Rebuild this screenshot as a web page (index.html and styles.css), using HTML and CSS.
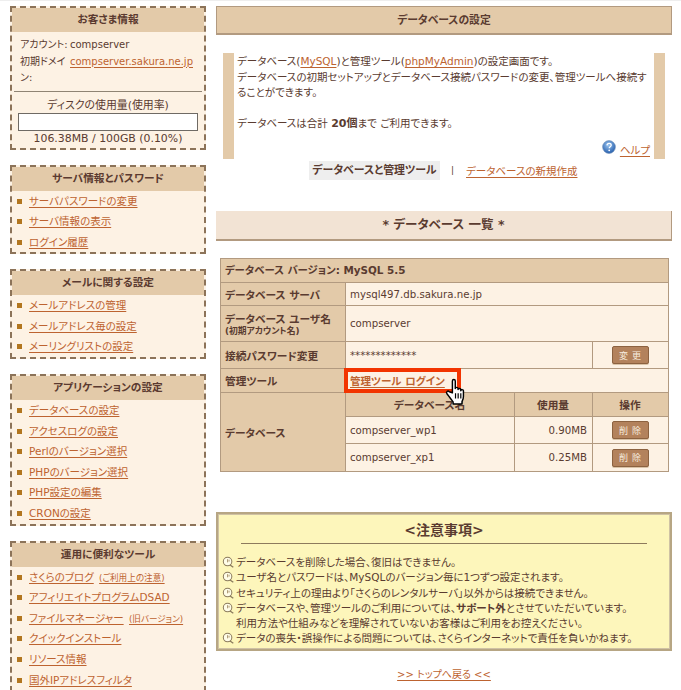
FILE: index.html
```html
<!DOCTYPE html>
<html lang="ja">
<head>
<meta charset="utf-8">
<title>データベースの設定</title>
<link rel="stylesheet" href="styles.css">
</head>
<body>
<svg class="defs" width="0" height="0" aria-hidden="true">
  <symbol id="note" viewBox="0 0 14 14">
    <circle cx="6" cy="6" r="4.6" fill="#fffde8" stroke="#8a7a5c" stroke-width="1.1"/>
    <path d="M6 3.4v3.4M7.6 4v2" stroke="#a58f68" stroke-width="1" fill="none"/>
    <path d="M8.6 9.6l3.6 2.6" stroke="#8a7a5c" stroke-width="1.4" fill="none"/>
  </symbol>
</svg>
<div class="page">
  <aside class="side">
    <section class="box">
      <h2 class="box-title">お客さま情報</h2>
      <div class="acct">
        <span>アカウント:</span><span>compserver</span>
        <span>初期ドメイン:</span><a href="#">compserver.sakura.ne.jp</a>
      </div>
      <div class="disk">
        <p class="disk-label">ディスクの使用量(使用率)</p>
        <div class="meter"></div>
        <p class="disk-value">106.38MB / 100GB (0.10%)</p>
      </div>
    </section>
    <section class="box">
      <h2 class="box-title">サーバ情報とパスワード</h2>
      <ul class="menu">
        <li><a href="#">サーバパスワードの変更</a></li>
        <li><a href="#">サーバ情報の表示</a></li>
        <li><a href="#">ログイン履歴</a></li>
      </ul>
    </section>
    <section class="box">
      <h2 class="box-title">メールに関する設定</h2>
      <ul class="menu">
        <li><a href="#">メールアドレスの管理</a></li>
        <li><a href="#">メールアドレス毎の設定</a></li>
        <li><a href="#">メーリングリストの設定</a></li>
      </ul>
    </section>
    <section class="box">
      <h2 class="box-title">アプリケーションの設定</h2>
      <ul class="menu">
        <li><a href="#">データベースの設定</a></li>
        <li><a href="#">アクセスログの設定</a></li>
        <li><a href="#">Perlのバージョン選択</a></li>
        <li><a href="#">PHPのバージョン選択</a></li>
        <li><a href="#">PHP設定の編集</a></li>
        <li><a href="#">CRONの設定</a></li>
      </ul>
    </section>
    <section class="box">
      <h2 class="box-title">運用に便利なツール</h2>
      <ul class="menu">
        <li><a href="#">さくらのブログ</a> <a class="small" href="#">(ご利用上の注意)</a></li>
        <li><a href="#">アフィリエイトプログラムDSAD</a></li>
        <li><a href="#">ファイルマネージャー</a> <a class="small" href="#">(旧バージョン)</a></li>
        <li><a href="#">クイックインストール</a></li>
        <li><a href="#">リソース情報</a></li>
        <li><a href="#">国外IPアドレスフィルタ</a></li>
      </ul>
    </section>
  </aside>
  <main class="main">
    <h1 class="page-title">データベースの設定</h1>
    <div class="intro">
      <p>データベース(<a href="#">MySQL</a>)と管理ツール(<a href="#">phpMyAdmin</a>)の設定画面です。<br>データベースの初期セットアップとデータベース接続パスワードの変更、管理ツールへ接続することができます。</p>
      <p class="quota">データベースは合計 <b>20個</b>まで ご利用できます。</p>
      <p class="help">
        <svg class="help-icon" viewBox="0 0 14 14" aria-hidden="true">
          <defs><radialGradient id="hg" cx="45%" cy="35%" r="70%"><stop offset="0" stop-color="#9cc6f0"/><stop offset="1" stop-color="#1c56a8"/></radialGradient></defs>
          <circle cx="7" cy="7" r="6.4" fill="url(#hg)" stroke="#6f8fb5" stroke-width=".6"/>
          <path d="M5 5.4c.1-1.4 1.1-2 2.1-2 1.2 0 2.1.7 2.1 1.8 0 1.5-2 1.6-2 3" fill="none" stroke="#fff" stroke-width="1.3"/>
          <circle cx="7.2" cy="10.3" r=".9" fill="#fff"/>
        </svg>
        <a href="#">ヘルプ</a>
      </p>
    </div>
    <nav class="tabs">
      <span class="tab-on">データベースと管理ツール</span>
      <span class="tab-sep">|</span>
      <a href="#">データベースの新規作成</a>
    </nav>
    <h2 class="list-title">* データベース 一覧 *</h2>
    <table class="db">
      <colgroup><col class="c1"><col class="c2"><col class="c3"><col class="c4"></colgroup>
      <tr class="r1"><th colspan="4">データベース バージョン: MySQL 5.5</th></tr>
      <tr class="r2"><th>データベース サーバ</th><td colspan="3">mysql497.db.sakura.ne.jp</td></tr>
      <tr class="r3"><th>データベース ユーザ名<small>(初期アカウント名)</small></th><td colspan="3">compserver</td></tr>
      <tr class="r4"><th>接続パスワード変更</th><td colspan="2">*************</td><td class="op"><button class="btn" type="button">変 更</button></td></tr>
      <tr class="r5"><th>管理ツール</th><td colspan="3" class="login"><a href="#">管理ツール ログイン</a>
        <span class="mark"></span>
        <svg class="hand" viewBox="0 0 20 24" aria-hidden="true">
          <path d="M7 13V3.2C7 1.6 9.4 1.6 9.4 3.2V9.6c0-1.4 2.3-1.4 2.3 0v.8c0-1.3 2.3-1.3 2.3 0v.9c0-1.2 2.2-1.2 2.2.1v4.8c0 2-.6 2.9-1.2 4.2v2H7.6v-1.8C6.4 19 3.6 15.6 2.4 13.8c-1-1.5.8-2.8 2-1.6z" fill="#fff" stroke="#000" stroke-width="1.2" stroke-linejoin="round"/>
          <path d="M9.6 13.4v4.4M11.8 13.4v4.4M14 13.4v4.4" stroke="#000" stroke-width="1"/>
        </svg>
      </td></tr>
      <tr class="r6"><th rowspan="3">データベース</th><th class="ch">データベース名</th><th class="ch">使用量</th><th class="ch">操作</th></tr>
      <tr class="r7"><td>compserver_wp1</td><td class="num">0.90MB</td><td class="op"><button class="btn" type="button">削 除</button></td></tr>
      <tr class="r8"><td>compserver_xp1</td><td class="num">0.25MB</td><td class="op"><button class="btn" type="button">削 除</button></td></tr>
    </table>
    <section class="notice">
      <h3 class="notice-title">&lt;注意事項&gt;</h3>
      <ul class="notes">
        <li><svg class="note-icon"><use href="#note"/></svg>データベースを削除した場合、復旧はできません。</li>
        <li><svg class="note-icon"><use href="#note"/></svg>ユーザ名とパスワードは、MySQLのバージョン毎に1つずつ設定されます。</li>
        <li><svg class="note-icon"><use href="#note"/></svg>セキュリティ上の理由より「さくらのレンタルサーバ」以外からは接続できません。</li>
        <li><svg class="note-icon"><use href="#note"/></svg>データベースや、管理ツールのご利用については、<b>サポート外</b>とさせていただいています。<br>利用方法や仕組みなどを理解されていないお客様はご利用をお控えください。</li>
        <li><svg class="note-icon"><use href="#note"/></svg>データの喪失・誤操作による問題については、さくらインターネットで責任を負いかねます。</li>
      </ul>
    </section>
    <p class="back"><a href="#">&gt;&gt; トップへ戻る &lt;&lt;</a></p>
  </main>
</div>
</body>
</html>
```
FILE: styles.css
```css
* { box-sizing: border-box; }
html, body { margin: 0; height: 690px; overflow: hidden; background: #fff; }
body {
  font-family: "DejaVu Sans", "Noto Sans CJK JP", sans-serif;
  font-size: 10.5px;
  color: #5a3b30;
  border-top: 1px solid #eee;
  font-feature-settings: "palt";
}
a { color: #bd6330; text-decoration: underline; text-underline-offset: 2px; }
p, h1, h2, h3, ul { margin: 0; padding: 0; }
ul { list-style: none; }
.defs { position: absolute; }

.page { display: flex; align-items: flex-start; padding: 5px 0 0 10px; gap: 10px; }
.side { width: 196px; flex: none; }
.main { width: 456px; flex: none; }

.box { border: 2px dashed #8c7359; background: #fdf2e4; margin-bottom: 15px; }
.box-title {
  background: #e3caa9;
  height: 24px;
  line-height: 23px;
  text-align: center;
  font-size: 10.7px;
  font-weight: 700;
  color: #5b3a30;
}
.acct {
  display: grid;
  grid-template-columns: 50px 1fr;
  margin: 5px 2px 0;
  padding: 0 0 4px 6px;
  font-size: 10px;
  line-height: 16.5px;
  border-bottom: 1px solid #8f8474;
  align-items: start;
}
.acct a { white-space: nowrap; }
.disk { text-align: center; font-size: 10.9px; line-height: 14px; padding-top: 7px; height: 56px; }
.meter { height: 18px; margin: 0 6px; background: #fff; border: 1px solid #6f6a64; }
.disk-value { line-height: 15px; }

.menu { padding: 0 0 0 5px; }
.menu li { height: 20.6px; line-height: 20.6px; white-space: nowrap; position: relative; padding-left: 12px; }
.menu li::before {
  content: "";
  position: absolute;
  left: 0;
  top: 8px;
  width: 5px;
  height: 5px;
  background: #b2761f;
}
.small { font-size: 8.6px; margin-left: 2px; }

.page-title {
  height: 29px;
  line-height: 27px;
  text-align: center;
  font-size: 10.8px;
  font-weight: 700;
  background: #e3caa9;
  border: 1px solid #b29a80;
  border-bottom-width: 2px;
}
.intro {
  margin: 18px 7px 0;
  padding: 1px 4px 0 3px;
  height: 106px;
  border-left: 11px solid #e3caa9;
  border-right: 11px solid #e3caa9;
  line-height: 15.5px;
  display: flex;
  flex-direction: column;
}
.intro .quota { margin-top: 15px; }
.help { margin-top: auto; text-align: right; line-height: 18px; }
.help-icon { width: 14px; height: 14px; vertical-align: 0; margin-right: 1px; }
.quota b { font-size: 11px; }

.tabs { display: flex; align-items: center; height: 20px; margin-top: 1px; margin-left: 93px; }
.tab-on { background: #eee; font-size: 10.9px; font-weight: 700; height: 19px; line-height: 19px; width: 131px; text-align: center; white-space: nowrap; }
.tab-sep { margin: 0 12px 0 11px; font-size: 9px; }

.list-title {
  margin-top: 31px;
  height: 30px;
  line-height: 28px;
  text-align: center;
  font-size: 12.5px;
  font-weight: 700;
  background: #f2e3d4;
  border-right: 1px solid #b29a80;
  border-bottom: 2px solid #b29a80;
}

.db {
  border-collapse: collapse;
  table-layout: fixed;
  width: 448px;
  margin: 17px 0 0 4px;
  background: #fdf2e4;
}
.c1 { width: 125px; }
.c2 { width: 169px; }
.c3 { width: 78px; }
.c4 { width: 76px; }
.db th, .db td { border: 1px solid #b29a80; padding: 0 5px 0 4px; text-align: left; }
.db td { font-size: 10.2px; }
.db th { background: #e3caa9; font-size: 10.7px; font-weight: 700; white-space: nowrap; }
.db .r1 th { font-size: 10.4px; padding-bottom: 2px; }
.db small { display: block; font-size: 8.8px; line-height: 11px; }
.db .ch { text-align: center; }
.db .num { text-align: right; }
.db .op { text-align: center; padding: 0; }
.r1 { height: 24px; }
.r2 { height: 23px; }
.r3 { height: 36px; }
.r4 { height: 27px; }
.r5 { height: 24px; }
.r6 { height: 24px; }
.r7 { height: 27px; }
.r8 { height: 28px; }
.btn {
  display: block;
  width: 37px;
  height: 18px;
  margin: 0 auto;
  padding: 0;
  border: 1px solid #8c6240;
  border-radius: 2px;
  background: #b3825c;
  color: #f7ecdf;
  font: 9px "Noto Sans CJK JP", sans-serif;
  letter-spacing: 1px;
  box-shadow: 0 1px 0 #d9c2a6;
}
.db .login { position: relative; font-size: 10.5px; font-weight: 700; background: #fdf2e4; }
.mark {
  position: absolute;
  left: -2px;
  top: -1px;
  width: 117px;
  height: 25px;
  border: 4px solid #f23400;
  z-index: 1;
  pointer-events: none;
}
.login a { position: relative; z-index: 2; }
.hand { position: absolute; left: 98px; top: 8px; width: 24px; height: 29px; z-index: 3; }

.notice {
  margin-top: 40px;
  height: 139px;
  background: #fdf6bb;
  border: 2px solid #b7a684;
  outline: 1px solid #cfc2a4;
  outline-offset: -3px;
  padding: 0 4px;
}
.notice-title {
  margin: 0 19px;
  height: 30px;
  line-height: 33px;
  text-align: center;
  font-size: 14px;
  font-weight: 700;
  border-bottom: 1px solid #8d7a5c;
}
.notes { margin-top: 11px; line-height: 15.3px; }
.notes li { position: relative; padding-left: 14px; white-space: nowrap; }
.note-icon { position: absolute; left: 0; top: 1px; width: 13px; height: 13px; }
.back { margin-top: 17px; font-size: 10px; text-align: center; line-height: 14px; }
```
